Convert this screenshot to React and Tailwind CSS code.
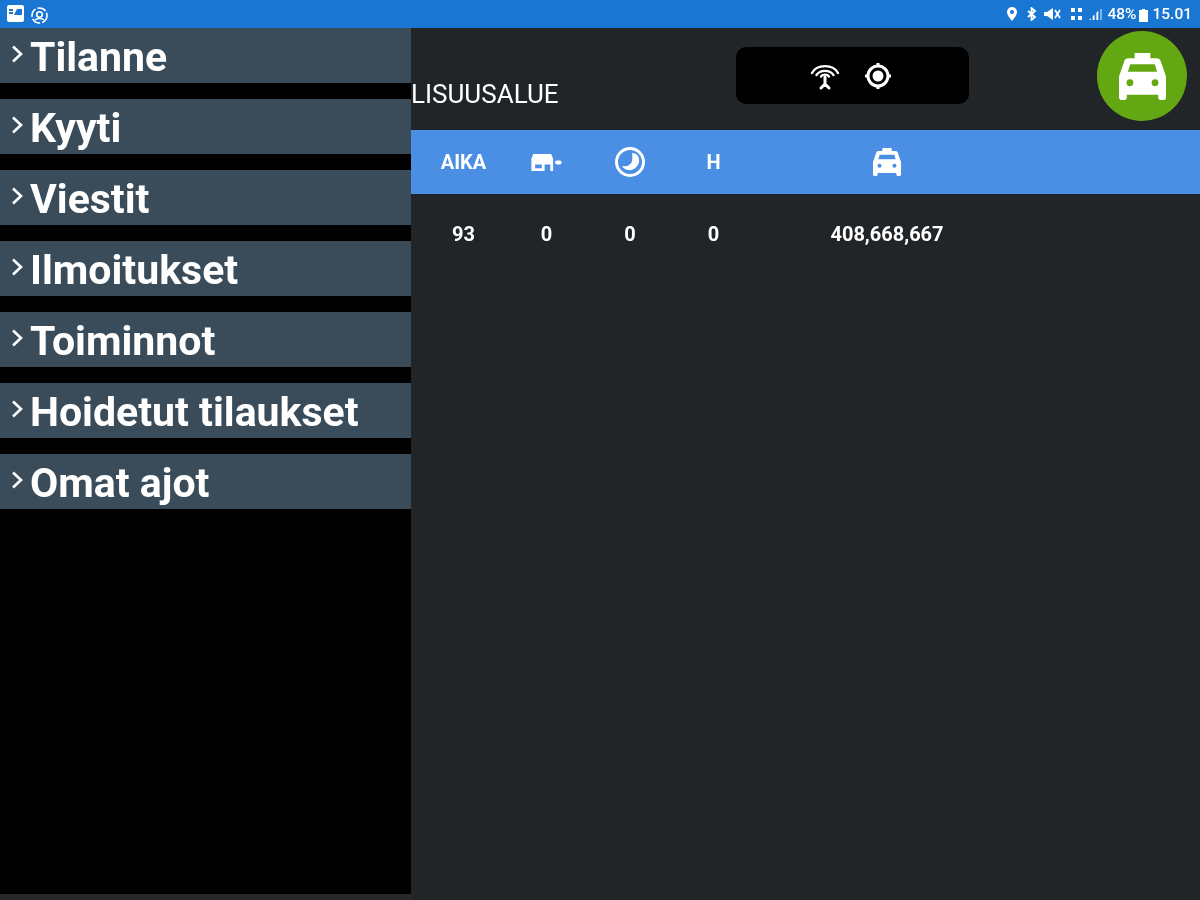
const menu = ['Tilanne', 'Kyyti', 'Viestit', 'Ilmoitukset', 'Toiminnot', 'Hoidetut tilaukset', 'Omat ajot']

function Taxi({ className }) {
  return (
    <svg viewBox="3 3 18 18" className={className} fill="currentColor">
      <path
        fillRule="evenodd"
        d="M9 3h6v2h2.500c.66 0 1.220.42 1.420 1.010L21 12v8c0 .55-.45 1-1 1h-1c-.55 0-1-.45-1-1v-1H6v1c0 .55-.45 1-1 1H4c-.55 0-1-.45-1-1v-8l2.080-5.990C5.290 5.420 5.840 5 6.500 5H9zM7.300 7.300L6.400 10.200h11.200l-.9-2.900zM7.200 13.100a1.300 1.300 0 1 0 0 2.600 1.300 1.300 0 0 0 0-2.600zm9.600 0a1.300 1.300 0 1 0 0 2.600 1.300 1.300 0 0 0 0-2.600z"
      />
    </svg>
  )
}

function StatusBar() {
  return (
    <div className="h-[28px] bg-[#1976d2] flex items-center justify-between pl-[7px] pr-[8px] text-white">
      <div className="flex items-center gap-[7px]">
        <svg viewBox="0 0 17 17" className="w-[17px] h-[17px] mb-[2px]">
          <rect width="17" height="17" rx="2" fill="#fff" />
          <rect x="2" y="4" width="4" height="2" fill="#1976d2" />
          <rect x="2" y="7" width="4" height="2" fill="#1976d2" />
          <path d="M7 10l3-6 5 0v6z" fill="#1976d2" />
        </svg>
        <svg viewBox="0 0 17 17" className="w-[17px] h-[17px] mt-[2px]" fill="none" stroke="#fff">
          <circle cx="8.500" cy="8.500" r="7.500" strokeWidth="1.600" strokeDasharray="9 2" />
          <circle cx="8.500" cy="7.500" r="2.800" strokeWidth="1.600" />
          <path d="M4 13c2-2 7-2 9 0" strokeWidth="1.600" />
        </svg>
      </div>
      <div className="flex items-center font-['Roboto',sans-serif] text-[15.5px] font-medium">
        <svg viewBox="0 0 12 14" className="w-[12px] h-[14px] mr-[9px]">
          <path fillRule="evenodd" d="M6 0a5 5 0 0 1 5 5c0 3.500-5 9-5 9S1 8.500 1 5a5 5 0 0 1 5-5zm0 3a2 2 0 1 0 0 4 2 2 0 0 0 0-4z" fill="#fff" />
        </svg>
        <svg viewBox="0 0 10 14" className="w-[10px] h-[14px] mr-[7px]" fill="none" stroke="#fff" strokeWidth="1.800">
          <path d="M1 4l7 6-3.500 3V1L8 4l-7 6" />
        </svg>
        <svg viewBox="0 0 17 14" className="w-[17px] h-[14px] mr-[9px]">
          <path d="M0 5h3l6-4v12l-6-4H0z" fill="#fff" />
          <path d="M11 3l5 8M16 3l-5 8" stroke="#fff" strokeWidth="1.700" />
        </svg>
        <svg viewBox="0 0 14 14" className="w-[14px] h-[14px] mr-[5px]" fill="#fff">
          <rect x="1" y="1" width="4" height="4" />
          <rect x="8" y="1" width="4" height="4" />
          <rect x="1" y="9" width="4" height="4" />
          <rect x="8" y="9" width="4" height="4" />
        </svg>
        <svg viewBox="0 0 14 12" className="w-[13px] h-[11px] mr-[5px]" fill="#fff">
          <path d="M0 12l2-2v2zM4 12V8l2-2v6zM8 12V4l2-2v10z" />
          <path d="M12 12V0l2 0v12z" opacity="0.5" />
        </svg>
        <span className="mt-[2px]">48%</span>
        <svg viewBox="0 0 9 13" className="w-[9px] h-[13px] mx-[3px] mt-[2px]">
          <path d="M3 0h3v1h3v12H0V1h3z" fill="#fff" />
        </svg>
        <span className="ml-[1px] mt-[2px]">15.01</span>
      </div>
    </div>
  )
}

function Sidebar() {
  return (
    <div className="w-[411px] h-[866px] bg-black flex flex-col gap-[16px] shrink-0">
      {menu.map(label => (
        <div key={label} className="h-[55px] bg-[#3a4c59] flex items-center pl-[11px] text-white">
          <svg viewBox="0 0 12 18" className="w-[12px] h-[18px] mr-[7px] mb-[3px] shrink-0" fill="none" stroke="currentColor" strokeWidth="2.600">
            <path d="M2 1.500L10 9l-8 7.500" />
          </svg>
          <span className="font-['Roboto',sans-serif] font-bold text-[41px] leading-none mt-[4px]">{label}</span>
        </div>
      ))}
    </div>
  )
}

function Toolbar() {
  return (
    <div className="h-[102px] flex">
      <div className="w-[325px] pt-[50px] font-['Roboto',sans-serif] text-[26px] leading-[32px] text-white">LISUUSALUE</div>
      <div className="w-[233px] h-[57px] mt-[19px] bg-black rounded-[10px] flex items-center justify-center gap-[24px] pr-[3px] text-white">
        <svg viewBox="0 0 30 30" className="w-[30px] h-[30px]" fill="none" stroke="currentColor" strokeWidth="2.400" strokeLinecap="round">
          <path d="M2 12a14 11 0 0 1 26 0" />
          <path d="M6.500 14a9.500 7.500 0 0 1 17 0" />
          <path d="M11 15.500a4.500 3.500 0 0 1 8 0" />
          <path d="M15 16v7M15 23l-4 4M15 23l4 4" strokeWidth="3" />
        </svg>
        <svg viewBox="0 0 28 28" className="w-[28px] h-[28px]" fill="none" stroke="currentColor">
          <circle cx="14" cy="14" r="10" strokeWidth="3" />
          <circle cx="14" cy="14" r="5.500" fill="currentColor" stroke="none" />
          <path d="M14 1v3M14 24v3M1 14h3M24 14h3" strokeWidth="3" />
        </svg>
      </div>
      <div className="flex-1 flex justify-end pr-[13px] pt-[3px]">
        <div className="w-[90px] h-[90px] rounded-full bg-[#63a812] flex items-center justify-center text-white">
          <Taxi className="w-[47px] h-[47px]" />
        </div>
      </div>
    </div>
  )
}

function TrafficTable() {
  const cols = 'grid grid-cols-[83px_83px_84px_83px_264px] pl-[11px] justify-items-center items-center'
  return (
    <div>
      <div className={`${cols} h-[64px] bg-[#4a8fe3] text-white font-['Roboto',sans-serif] font-bold text-[20px]`}>
        <span>AIKA</span>
        <svg viewBox="0 0 34 18" className="w-[33px] h-[17px]" fill="currentColor">
          <path fillRule="evenodd" d="M3 0h19l2 5v13h-3v-7h-6v7H1V5zm2 11v4h7v-4z" />
          <rect x="26" y="7" width="7" height="4" rx="2" />
        </svg>
        <svg viewBox="0 0 30 30" className="w-[30px] h-[30px]">
          <circle cx="15" cy="15" r="13.500" fill="none" stroke="currentColor" strokeWidth="3" />
          <path d="M17 6c5 0 8 4 7 9-1 5-6 9-11 8-3-.5-5-2-6-4 5 1 9-1 10-5 .5-3 .5-5 0-8z" fill="currentColor" />
        </svg>
        <span>H</span>
        <Taxi className="w-[28px] h-[28px]" />
      </div>
      <div className={`${cols} h-[80px] text-white font-['Roboto',sans-serif] font-bold text-[20px]`}>
        <span>93</span>
        <span>0</span>
        <span>0</span>
        <span>0</span>
        <span>408,668,667</span>
      </div>
    </div>
  )
}

export default function App() {
  return (
    <div className="w-[1200px] h-[900px] overflow-hidden bg-[#212528] blur-[0.5px]">
      <StatusBar />
      <div className="flex">
        <Sidebar />
        <div className="flex-1">
          <Toolbar />
          <TrafficTable />
        </div>
      </div>
      <div className="h-[6px] w-[411px] bg-[#282828]" />
    </div>
  )
}
